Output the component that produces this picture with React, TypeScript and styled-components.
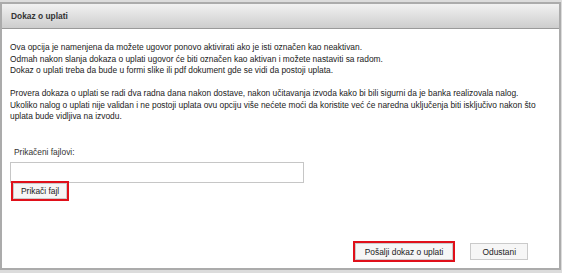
import styled, { createGlobalStyle } from 'styled-components'

const GlobalStyle = createGlobalStyle`
  html, body {
    margin: 0;
    padding: 0;
    background: #dcdcdc;
  }
  body {
    font-family: "Liberation Sans", Arial, sans-serif;
    font-size: 8.4px;
    color: #222;
  }
`

const Dialog = styled.div`
  box-sizing: border-box;
  margin: 2px 0 0 0;
  width: 561px;
  height: 268px;
  border: 2px solid #ababab;
  background: #fff;
  display: flex;
  flex-direction: column;
`

const Header = styled.div`
  height: 24px;
  display: flex;
  align-items: center;
  padding-left: 9px;
  background: linear-gradient(#f1f1f1, #cdcdcd);
  border-bottom: 1px solid #9a9a9a;
  font-weight: bold;
  color: #333;
`

const Body = styled.div`
  padding: 13px 8px 0 8px;
  line-height: 11.5px;
`

const Paragraph = styled.p`
  margin: 0 0 11.5px 0;
`

const Label = styled.div`
  margin-top: 24px;
  padding-left: 4px;
  color: #333;
`

const FileInput = styled.div`
  box-sizing: border-box;
  margin-top: 4px;
  width: 294px;
  height: 21px;
  border: 1px solid #c6c6c6;
  background: #fff;
`

const Button = styled.button<{ $highlight?: boolean; $pad: number }>`
  box-sizing: border-box;
  height: 17px;
  padding: 0 ${p => p.$pad}px;
  font-family: inherit;
  font-size: 8.4px;
  color: #222;
  background: #f6f6f6;
  border: 1px solid #cacaca;
  border-radius: 0;
  outline: ${p => (p.$highlight ? '2px solid #e0101a' : 'none')};
  cursor: pointer;
`

const AttachButton = styled(Button)`
  margin: 0 0 0 3px;
  height: 16px;
`

const Footer = styled.div`
  margin-top: auto;
  display: flex;
  justify-content: flex-end;
  gap: 17px;
  padding: 0 31px 8px 0;
`

export default function App() {
  return (
    <>
      <GlobalStyle />
      <Dialog>
        <Header>Dokaz o uplati</Header>
        <Body>
          <Paragraph>
            Ova opcija je namenjena da možete ugovor ponovo aktivirati ako je isti označen kao neaktivan.
            <br />
            Odmah nakon slanja dokaza o uplati ugovor će biti označen kao aktivan i možete nastaviti sa radom.
            <br />
            Dokaz o uplati treba da bude u formi slike ili pdf dokument gde se vidi da postoji uplata.
          </Paragraph>
          <Paragraph>
            Provera dokaza o uplati se radi dva radna dana nakon dostave, nakon učitavanja izvoda kako bi bili sigurni da je banka realizovala nalog.
            <br />
            Ukoliko nalog o uplati nije validan i ne postoji uplata ovu opciju više nećete moći da koristite već će naredna uključenja biti isključivo nakon što uplata bude vidljiva na izvodu.
          </Paragraph>
          <Label>Prikačeni fajlovi:</Label>
          <FileInput />
          <AttachButton $highlight $pad={7}>Prikači fajl</AttachButton>
        </Body>
        <Footer>
          <Button $highlight $pad={9}>Pošalji dokaz o uplati</Button>
          <Button $pad={11}>Odustani</Button>
        </Footer>
      </Dialog>
    </>
  )
}
